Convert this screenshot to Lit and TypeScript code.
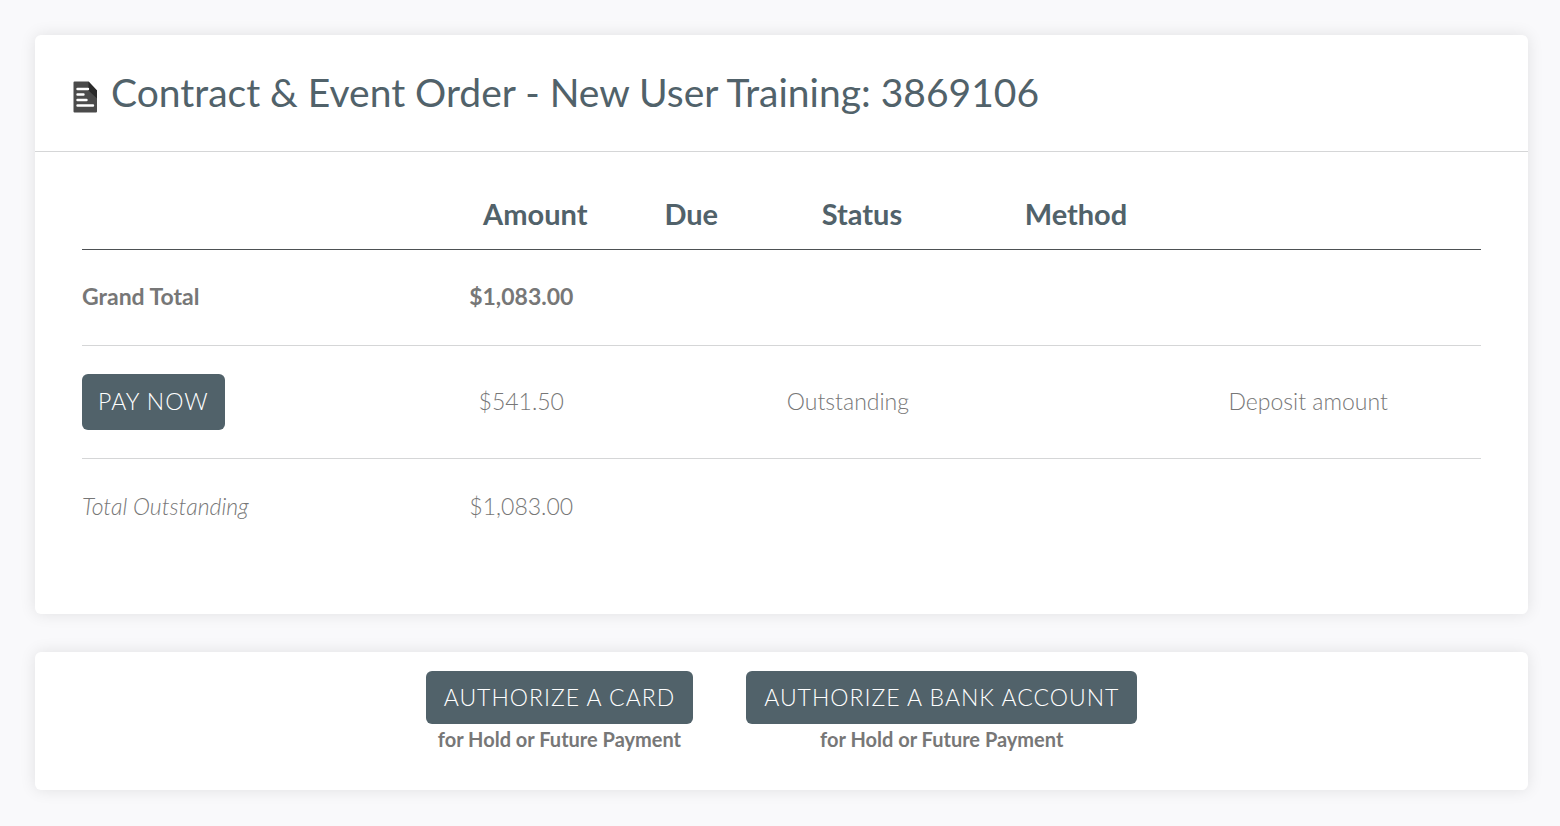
import { LitElement, html, css, svg, nothing } from "lit";
import { customElement } from "lit/decorators.js";

interface Row {
  label: string;
  kind: "total" | "payable" | "outstanding";
  amount: string;
  status?: string;
  note?: string;
}

const rows: Row[] = [
  { label: "Grand Total", kind: "total", amount: "$1,083.00" },
  { label: "Pay Now", kind: "payable", amount: "$541.50", status: "Outstanding", note: "Deposit amount" },
  { label: "Total Outstanding", kind: "outstanding", amount: "$1,083.00" },
];

const authorizations = ["Authorize a Card", "Authorize a Bank Account"];

const documentIcon = html`
  <svg class="icon" viewBox="0 0 24 32" aria-hidden="true">
    ${svg`
      <path fill="#4b4b4b" d="M1.500 0.500h14l8.500 9v21a1 1 0 0 1-1 1H1.500a1 1 0 0 1-1-1v-29a1 1 0 0 1 1-1z"/>
      <path fill="#2b2b2b" d="M15.500 0.500l8.500 9v8l-8.500-8z"/>
      <path stroke="#fff" stroke-width="2.400" stroke-linecap="round" d="M4.500 8h10.500M4.500 13.500h6M4.500 19h9M4.500 24.500h15.500"/>
    `}
  </svg>
`;

@customElement("app-root")
export class AppRoot extends LitElement {
  static styles = css`
    :host {
      display: block;
      box-sizing: border-box;
      min-height: 100vh;
      padding: 35px 32px 36px 35px;
      background: #f9f9fb;
      color: #777;
      font-family: Lato, "Open Sans", sans-serif;
      font-size: 23px;
      line-height: 28px;
    }
    .page {
      display: grid;
      gap: 38px;
    }
    .card {
      background: #fff;
      border-radius: 6px;
      box-shadow: 0 0 16px rgba(0, 0, 0, 0.1);
    }
    .head {
      display: flex;
      align-items: center;
      gap: 14px;
      padding: 33px 38px 35px;
      border-bottom: 1px solid #d5d6d7;
    }
    .icon {
      flex: none;
      width: 24px;
      height: 32px;
      margin-top: 10px;
    }
    .title {
      margin: 0;
      color: #51626a;
      font-size: 39px;
      font-weight: 400;
      line-height: 48px;
    }
    .body {
      padding: 34px 47px 60px;
    }
    .payments {
      width: 100%;
      border-collapse: collapse;
      table-layout: fixed;
    }
    .col-label { width: 24.4%; }
    .col-amount { width: 16%; }
    .col-due { width: 6.3%; }
    .col-status { width: 18.1%; }
    .col-method { width: 12.5%; }
    .heading {
      padding: 8px 0 15px;
      border-bottom: 1px solid #4d5154;
      color: #51626a;
      font-size: 29px;
      font-weight: 700;
      line-height: 40px;
    }
    .row + .row {
      border-top: 1px solid #d5d6d7;
    }
    .label,
    .cell {
      padding: 28px 28px 28px 0;
      font-weight: 300;
      vertical-align: baseline;
    }
    .label {
      padding-right: 0;
      text-align: left;
    }
    .cell {
      text-align: center;
    }
    .total .label,
    .total .cell {
      padding-top: 32px;
      padding-bottom: 35px;
      font-weight: 700;
    }
    .outstanding .label,
    .outstanding .cell {
      padding-top: 33px;
      padding-bottom: 34px;
    }
    .outstanding .label {
      font-style: italic;
    }
    .button {
      display: block;
      padding: 12px 18px 13px;
      border: 0;
      border-radius: 6px;
      background: #51626a;
      color: #fff;
      font: inherit;
      font-weight: 300;
      letter-spacing: 1px;
      text-transform: uppercase;
      cursor: pointer;
    }
    .payable .button {
      padding: 13px 16px 15px;
    }
    .actions {
      display: flex;
      flex-wrap: wrap;
      justify-content: center;
      gap: 20px 53px;
      padding: 19px 20px 39px;
    }
    .action {
      display: flex;
      flex-direction: column;
      align-items: center;
      gap: 3px;
    }
    .caption {
      font-size: 20px;
      font-weight: 700;
      line-height: 24px;
    }
  `;

  private renderRow(row: Row) {
    return html`
      <tr class="row ${row.kind}">
        <th class="label" scope="row">
          ${row.kind === "payable" ? html`<button class="button" type="button">${row.label}</button>` : row.label}
        </th>
        <td class="cell">${row.amount}</td>
        <td class="cell"></td>
        <td class="cell">${row.status ?? nothing}</td>
        <td class="cell"></td>
        <td class="cell">${row.note ?? nothing}</td>
      </tr>
    `;
  }

  render() {
    return html`
      <main class="page">
        <section class="card">
          <header class="head">
            ${documentIcon}
            <h1 class="title">Contract &amp; Event Order - New User Training: 3869106</h1>
          </header>
          <div class="body">
            <table class="payments">
              <colgroup>
                <col class="col-label" />
                <col class="col-amount" />
                <col class="col-due" />
                <col class="col-status" />
                <col class="col-method" />
                <col />
              </colgroup>
              <thead>
                <tr>
                  <td class="heading"></td>
                  ${["Amount", "Due", "Status", "Method"].map(
                    (name) => html`<th class="heading" scope="col">${name}</th>`
                  )}
                  <td class="heading"></td>
                </tr>
              </thead>
              <tbody>
                ${rows.map((row) => this.renderRow(row))}
              </tbody>
            </table>
          </div>
        </section>
        <section class="card actions">
          ${authorizations.map(
            (name, i) => html`
              <div class="action">
                <button class="button" type="button" aria-describedby="caption-${i}">${name}</button>
                <span class="caption" id="caption-${i}">for Hold or Future Payment</span>
              </div>
            `
          )}
        </section>
      </main>
    `;
  }
}
